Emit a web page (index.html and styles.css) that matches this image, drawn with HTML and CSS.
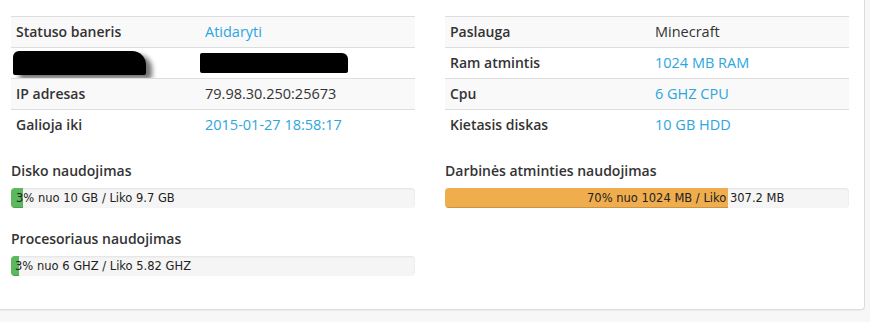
FILE: index.html
```html
<!DOCTYPE html>
<html lang="lt">
<head>
<meta charset="utf-8">
<title>Serveris</title>
<link rel="stylesheet" href="styles.css">
</head>
<body>
<div class="card">
  <div class="cols">
    <div class="col">
      <table class="info">
        <colgroup><col class="c-label-l"><col></colgroup>
        <tr class="odd"><td class="label">Statuso baneris</td><td class="link">Atidaryti</td></tr>
        <tr><td class="label"><div class="redact redact-l"></div></td><td><div class="redact redact-r"></div></td></tr>
        <tr class="odd"><td class="label">IP adresas</td><td>79.98.30.250:25673</td></tr>
        <tr><td class="label">Galioja iki</td><td class="link">2015-01-27 18:58:17</td></tr>
      </table>
      <h4 class="usage-title">Disko naudojimas</h4>
      <div class="progress">
        <div class="fill fill-green" style="width:3%"></div>
        <span class="bar-text text-disk">3% nuo 10 GB / Liko 9.7 GB</span>
      </div>
      <h4 class="usage-title second">Procesoriaus naudojimas</h4>
      <div class="progress">
        <div class="fill fill-green" style="width:2%"></div>
        <span class="bar-text text-cpu">3% nuo 6 GHZ / Liko 5.82 GHZ</span>
      </div>
    </div>
    <div class="col">
      <table class="info">
        <colgroup><col class="c-label-r"><col></colgroup>
        <tr class="odd"><td class="label">Paslauga</td><td>Minecraft</td></tr>
        <tr><td class="label">Ram atmintis</td><td class="link">1024 MB RAM</td></tr>
        <tr class="odd"><td class="label">Cpu</td><td class="link">6 GHZ CPU</td></tr>
        <tr><td class="label">Kietasis diskas</td><td class="link">10 GB HDD</td></tr>
      </table>
      <h4 class="usage-title">Darbinės atminties naudojimas</h4>
      <div class="progress">
        <div class="fill fill-orange" style="width:70%"></div>
        <span class="bar-text text-ram">70% nuo 1024 MB / Liko 307.2 MB</span>
      </div>
    </div>
  </div>
</div>
</body>
</html>
```

FILE: styles.css
```css
* { box-sizing: border-box; }

body {
  margin: 0;
  background: #f7f7f7;
  font-family: "Open Sans", "Noto Sans", sans-serif;
  color: #333;
  height: 322px;
  overflow: hidden;
}

.card {
  background: #fff;
  border: 1px solid #dcdcdc;
  border-top: none;
  border-radius: 0 0 4px 4px;
  margin: 0 5px 0 -5px;
  padding: 16px 15px 33px 15px;
  box-shadow: 0 1px 1px rgba(0,0,0,0.04);
}

.cols {
  display: grid;
  grid-template-columns: 404px 404px;
  column-gap: 30px;
}

.info {
  width: 100%;
  border-collapse: collapse;
  font-size: 14.5px;
  line-height: 20px;
}

.c-label-l { width: 189px; }
.c-label-r { width: 205px; }

.info td {
  border-top: 1px solid #dddddd;
  padding: 5px;
  height: 31px;
  vertical-align: middle;
  white-space: nowrap;
}

.info tr.odd td { background: #f9f9f9; }

.info td.label {
  font-size: 14px;
  font-weight: 600;
  color: #333;
}

.info td.link { color: #2ba6de; }

.redact {
  background: #000;
  height: 21px;
}

.redact-l {
  width: 133px;
  margin: -2px 0 -2px -3px;
  height: 24px;
  border-radius: 6px 14px 2px 2px;
  box-shadow: 6px 4px 5px rgba(0,0,0,0.55);
}

.redact-r {
  width: 148px;
  margin: -1px 0 0 -5px;
  height: 20px;
  border-radius: 2px 6px 2px 2px;
}

.usage-title {
  margin: 20px 0 7px 0;
  font-size: 14px;
  line-height: 20px;
  font-weight: 600;
  color: #333;
}

.usage-title.second { margin-top: 21px; }

.progress {
  position: relative;
  height: 20px;
  background: #f5f5f5;
  border-radius: 4px;
  overflow: hidden;
  box-shadow: inset 0 1px 2px rgba(0,0,0,0.08);
}

.fill {
  height: 100%;
  box-shadow: inset 0 -1px 0 rgba(0,0,0,0.15);
}

.fill-green { background: #5cb85c; }
.fill-orange { background: #f0ad4e; }

.bar-text {
  position: absolute;
  top: 0;
  line-height: 20px;
  font-family: "DejaVu Sans", Verdana, sans-serif;
  font-size: 11.5px;
  color: #222;
  white-space: nowrap;
}

.text-disk { left: 5px; }
.text-cpu { left: 4px; }
.text-ram { left: 142px; }
```
